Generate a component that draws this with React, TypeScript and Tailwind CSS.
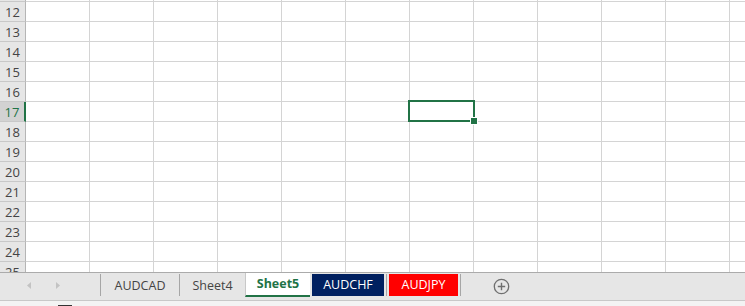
import React from 'react';

const rows = [11, 12, 13, 14, 15, 16, 17, 18, 19, 20, 21, 22, 23, 24, 25];
const cols = Array.from({ length: 12 }, (_, i) => i);

const font = { fontFamily: '"Open Sans", "Noto Sans", sans-serif' };

const Row = ({ n }: { n: number }) => {
  const active = n === 17;
  return (
    <div className="flex h-[20px] shrink-0">
      <div
        className={`w-[26px] shrink-0 flex items-center justify-center pt-[3px] text-[13px] border-b border-b-[#c8c8c8] ${
          active
            ? 'bg-[#d2d2d2] text-[#217346] border-r-2 border-r-[#217346]'
            : 'bg-[#e6e6e6] text-[#444] border-r border-r-[#b5b5b5]'
        }`}
      >
        {n > 11 ? n : ''}
      </div>
      {cols.map((c) => (
        <div key={c} className="w-[64px] shrink-0 border-r border-b border-[#d4d4d4] bg-white" />
      ))}
    </div>
  );
};

const Sep = () => <div className="w-px h-[22px] mt-[1px] bg-[#a6a6a6] shrink-0" />;

export default function App() {
  return (
    <div className="w-[745px] h-[306px] overflow-hidden flex flex-col bg-white" style={font}>
      {/* Grid */}
      <div className="relative h-[272px] shrink-0 overflow-hidden">
        <div className="flex flex-col -mt-[18px]">
          {rows.map((n) => (
            <Row key={n} n={n} />
          ))}
        </div>
        {/* Selection */}
        <div className="absolute left-[408px] top-[100px] w-[67px] h-[22px] border-2 border-[#217346]" />
        <div className="absolute left-[471px] top-[118px] w-[6px] h-[6px] bg-[#217346] outline outline-1 outline-white" />
      </div>

      {/* Sheet tabs */}
      <div className="h-[29px] shrink-0 flex items-start bg-[#e6e6e6] border-t border-t-[#ababab] border-b border-b-[#c8c8c8] text-[12.5px] leading-none">
        <div className="w-[100px] h-[26px] shrink-0 flex items-center">
          <svg width="100" height="26" viewBox="0 0 100 26">
            <path d="M31 9 L27 12.5 L31 16 Z" fill="#c3c3c3" />
            <path d="M56 9 L60 12.5 L56 16 Z" fill="#c3c3c3" />
          </svg>
        </div>
        <Sep />
        <div className="w-[78px] h-[26px] shrink-0 flex items-center justify-center text-[#444]">AUDCAD</div>
        <Sep />
        <div className="w-[65px] h-[26px] shrink-0 flex items-center justify-center text-[#444]">Sheet4</div>
        <div className="w-[65px] h-[24px] shrink-0 flex items-center justify-center bg-white border-l border-l-[#c8c8c8] border-b-2 border-b-[#217346] font-bold text-[#217346] pt-[1px]">
          Sheet5
        </div>
        <div className="w-[72px] h-[22px] mt-[1px] ml-[2px] shrink-0 flex items-center justify-center bg-[#002060] text-white">
          AUDCHF
        </div>
        <div className="w-[2px] shrink-0" />
        <Sep />
        <div className="w-[69px] h-[22px] mt-[1px] ml-[2px] shrink-0 flex items-center justify-center bg-[#ff0000] text-white">
          AUDJPY
        </div>
        <div className="w-[2px] shrink-0" />
        <Sep />
        <div className="ml-[32px] h-[26px] flex items-center">
          <svg width="17" height="17" viewBox="0 0 17 17">
            <circle cx="8.5" cy="8.5" r="7.2" fill="none" stroke="#6f6f6f" strokeWidth="1.3" />
            <path d="M8.5 4.8 V12.2 M4.8 8.5 H12.2" stroke="#6f6f6f" strokeWidth="1.4" />
          </svg>
        </div>
      </div>

      {/* Status strip */}
      <div className="flex-1 bg-[#f3f3f3] relative">
        <div className="absolute left-[58px] top-[4px] w-[14px] h-[2px] bg-[#333]" />
      </div>
    </div>
  );
}
